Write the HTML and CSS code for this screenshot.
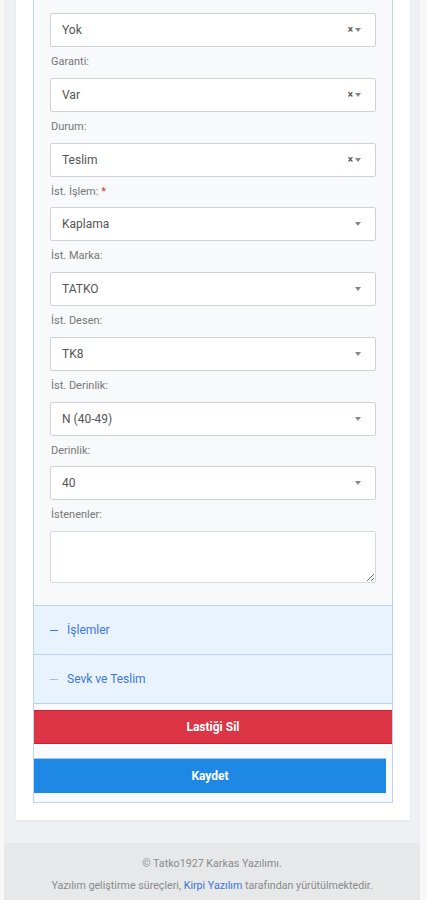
FILE: index.html
```html
<!DOCTYPE html>
<html lang="tr">
<head>
<meta charset="utf-8">
<title>Lastik</title>
<link rel="stylesheet" href="styles.css">
</head>
<body>
<div class="page">
  <div class="card">
    <div class="panel">
      <div class="form-body">
        <div class="select"><span class="value">Yok</span><span class="icons"><span class="clear">×</span><span class="caret"></span></span></div>
        <label class="label">Garanti:</label>
        <div class="select"><span class="value">Var</span><span class="icons"><span class="clear">×</span><span class="caret"></span></span></div>
        <label class="label">Durum:</label>
        <div class="select"><span class="value">Teslim</span><span class="icons"><span class="clear">×</span><span class="caret"></span></span></div>
        <label class="label">İst. İşlem: <span class="req">*</span></label>
        <div class="select"><span class="value">Kaplama</span><span class="icons"><span class="caret"></span></span></div>
        <label class="label">İst. Marka:</label>
        <div class="select"><span class="value">TATKO</span><span class="icons"><span class="caret"></span></span></div>
        <label class="label">İst. Desen:</label>
        <div class="select"><span class="value">TK8</span><span class="icons"><span class="caret"></span></span></div>
        <label class="label">İst. Derinlik:</label>
        <div class="select"><span class="value">N (40-49)</span><span class="icons"><span class="caret"></span></span></div>
        <label class="label">Derinlik:</label>
        <div class="select"><span class="value">40</span><span class="icons"><span class="caret"></span></span></div>
        <label class="label">İstenenler:</label>
        <textarea class="textarea"></textarea>
      </div>
      <div class="acc-head"><span class="dash"></span><span>İşlemler</span></div>
      <div class="acc-head"><span class="dash light"></span><span>Sevk ve Teslim</span></div>
      <div class="actions">
        <button class="btn btn-danger">Lastiği Sil</button>
        <button class="btn btn-primary">Kaydet</button>
      </div>
    </div>
  </div>
  <footer class="footer">
    <div>© Tatko1927 Karkas Yazılımı.</div>
    <div>Yazılım geliştirme süreçleri, <a class="link" href="#">Kirpi Yazılım</a> tarafından yürütülmektedir.</div>
  </footer>
</div>
</body>
</html>
```
FILE: styles.css
```css
* { box-sizing: border-box; }
html, body { margin: 0; padding: 0; }
body {
  background: #f8f8f9;
  font-family: Roboto, "Liberation Sans", Arial, sans-serif;
  width: 427px;
  height: 900px;
  overflow: hidden;
}
.page {
  margin-left: 4px;
  width: 416px;
  background: #eef0f3;
  display: flex;
  flex-direction: column;
  height: 900px;
}
.card {
  margin: 0 10px 0 12px;
  background: #ffffff;
  padding: 0 17px 17px 17px;
  box-shadow: 0 1px 2px rgba(0,0,0,0.06);
}
.panel {
  border: 1px solid #bcd5f4;
  border-top: none;
  background: #f7f9fb;
}
.form-body {
  padding: 13px 16px 22px 16px;
  display: flex;
  flex-direction: column;
}
.select {
  height: 34px;
  background: #fff;
  border: 1px solid #cfd3d8;
  border-radius: 2px;
  display: flex;
  align-items: center;
  justify-content: space-between;
  padding: 0 14px 0 11px;
}
.value {
  font-size: 12px;
  color: #555;
}
.icons {
  display: flex;
  align-items: center;
  gap: 2px;
}
.clear {
  font-size: 10px;
  font-weight: bold;
  color: #555;
  line-height: 1;
}
.caret {
  width: 0;
  height: 0;
  border-left: 3px solid transparent;
  border-right: 3px solid transparent;
  border-top: 4px solid #888;
}
.label {
  display: block;
  font-size: 11px;
  color: #777;
  line-height: 14.75px;
  padding: 8px 0 8px 1px;
}
.req { color: #d9363e; }
.textarea {
  height: 52px;
  resize: vertical;
  border: 1px solid #d6d9dd;
  border-radius: 2px;
  background: #fff;
  font-family: inherit;
  display: block;
  width: 100%;
}
.acc-head {
  height: 49px;
  border-top: 1px solid #b9d3f3;
  background: #e9f3fd;
  display: flex;
  align-items: center;
  gap: 9px;
  padding-left: 16px;
  font-size: 12px;
  color: #3e78d8;
}
.dash {
  width: 8px;
  height: 1px;
  background: #3e78d8;
}
.dash.light { background: #9dbdee; }
.actions {
  border-top: 1px solid #b9d3f3;
  background: #f9fafc;
  padding: 6px 0 9px 0;
  display: flex;
  flex-direction: column;
}
.btn {
  border: none;
  height: 34px;
  font-family: inherit;
  font-size: 12px;
  font-weight: bold;
  color: #fff;
  border-radius: 0;
  padding: 0;
}
.btn-danger {
  background: #dc3545;
  border-top: 1px solid #c82333;
  border-bottom: 1px solid #c82333;
}
.btn-primary {
  margin-top: 14px;
  margin-right: 6px;
  height: 35px;
  background: #1e88e5;
  border-top: 1px solid #9fc6f0;
}
.footer {
  margin-top: 23px;
  flex: 1;
  background: #e7e8ea;
  text-align: center;
  font-size: 10.7px;
  color: #8a8a8a;
  padding-top: 10px;
  line-height: 22px;
}
.link { color: #3b74d6; text-decoration: none; }
```
